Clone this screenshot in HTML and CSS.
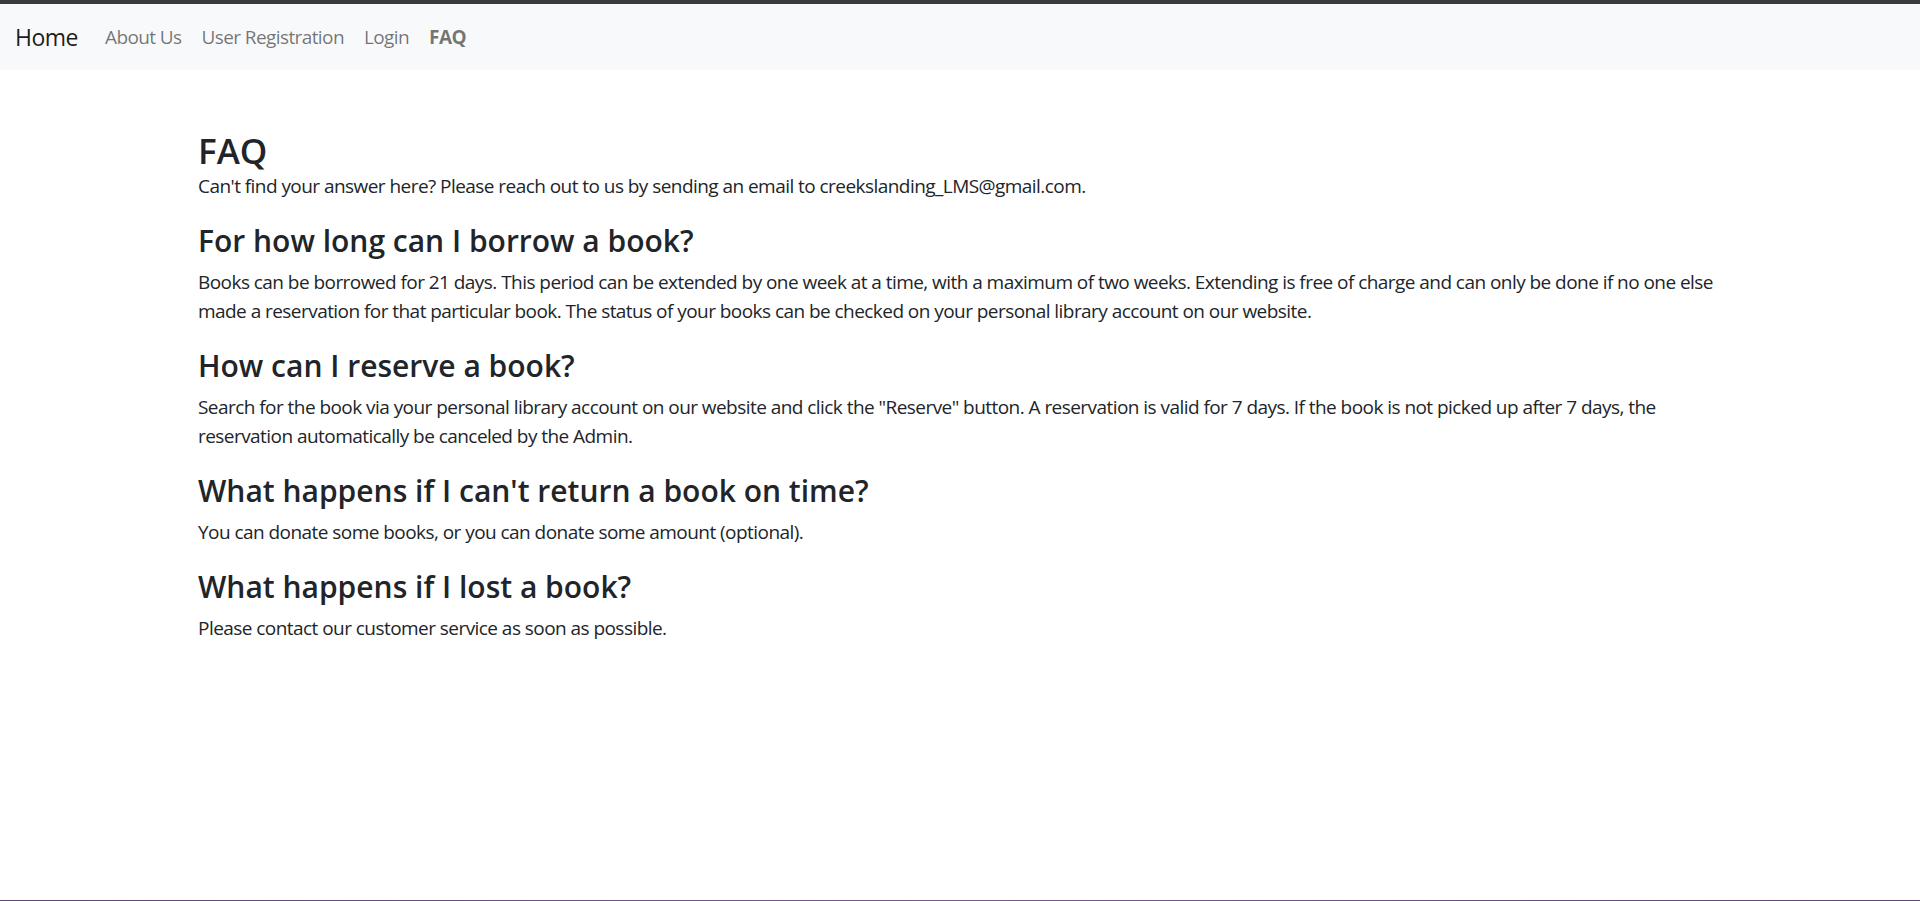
FILE: index.html
```html
<!DOCTYPE html>
<html lang="en">
<head>
<meta charset="utf-8">
<title>FAQ</title>
<link rel="stylesheet" href="styles.css">
</head>
<body>
<div class="page">
  <div class="topbar"></div>
  <nav class="navbar">
    <a class="brand" href="#">Home</a>
    <ul class="nav">
      <li><a class="nav-link" href="#">About Us</a></li>
      <li><a class="nav-link" href="#">User Registration</a></li>
      <li><a class="nav-link" href="#">Login</a></li>
      <li><a class="nav-link active" href="#">FAQ</a></li>
    </ul>
  </nav>
  <main class="content">
    <h1 class="title">FAQ</h1>
    <p class="intro">Can't find your answer here? Please reach out to us by sending an email to creekslanding_LMS@gmail.com.</p>
    <h2 class="question">For how long can I borrow a book?</h2>
    <p class="answer">Books can be borrowed for 21 days. This period can be extended by one week at a time, with a maximum of two weeks. Extending is free of charge and can only be done if no one else made a reservation for that particular book. The status of your books can be checked on your personal library account on our website.</p>
    <h2 class="question">How can I reserve a book?</h2>
    <p class="answer">Search for the book via your personal library account on our website and click the "Reserve" button. A reservation is valid for 7 days. If the book is not picked up after 7 days, the reservation automatically be canceled by the Admin.</p>
    <h2 class="question">What happens if I can't return a book on time?</h2>
    <p class="answer">You can donate some books, or you can donate some amount (optional).</p>
    <h2 class="question">What happens if I lost a book?</h2>
    <p class="answer">Please contact our customer service as soon as possible.</p>
  </main>
  <div class="bottomline"></div>
</div>
</body>
</html>
```
FILE: styles.css
```css
* { box-sizing: border-box; }
html, body { margin: 0; padding: 0; }
body {
  font-family: "Open Sans", "Noto Sans", sans-serif;
  font-size: 19px;
  line-height: 29px;
  color: #212529;
  background: #fff;
  letter-spacing: -0.55px;
}
.page {
  min-height: 901px;
  display: flex;
  flex-direction: column;
}
.topbar {
  height: 4px;
  background: #3a3a3a;
}
.navbar {
  height: 66px;
  background: #f8f9fa;
  display: flex;
  align-items: center;
  padding: 0 15px;
}
.brand {
  font-size: 23px;
  letter-spacing: -0.5px;
  color: rgba(0, 0, 0, 0.9);
  text-decoration: none;
  margin-right: 17px;
  line-height: 37px;
}
.nav {
  display: flex;
  list-style: none;
  margin: 0;
  padding: 0;
}
.nav-link {
  display: block;
  padding: 0 10px;
  color: rgba(0, 0, 0, 0.55);
  text-decoration: none;
  font-size: 19px;
  letter-spacing: -0.6px;
}
.nav-link.active { font-weight: 700; }
.content {
  flex: 1;
  padding: 60px 175px 0 198px;
}
.title {
  font-size: 35px;
  line-height: 42px;
  font-weight: 600;
  letter-spacing: 0;
  margin: 0;
}
.intro { margin: 0 0 22px; }
.question {
  font-size: 30px;
  line-height: 36px;
  font-weight: 600;
  letter-spacing: 0;
  margin: 0 0 9px;
}
.answer { margin: 0 0 22px; }
.bottomline {
  height: 1px;
  background: linear-gradient(90deg, #5b4470, #7a5a8c 50%, #5b4470);
}
```
